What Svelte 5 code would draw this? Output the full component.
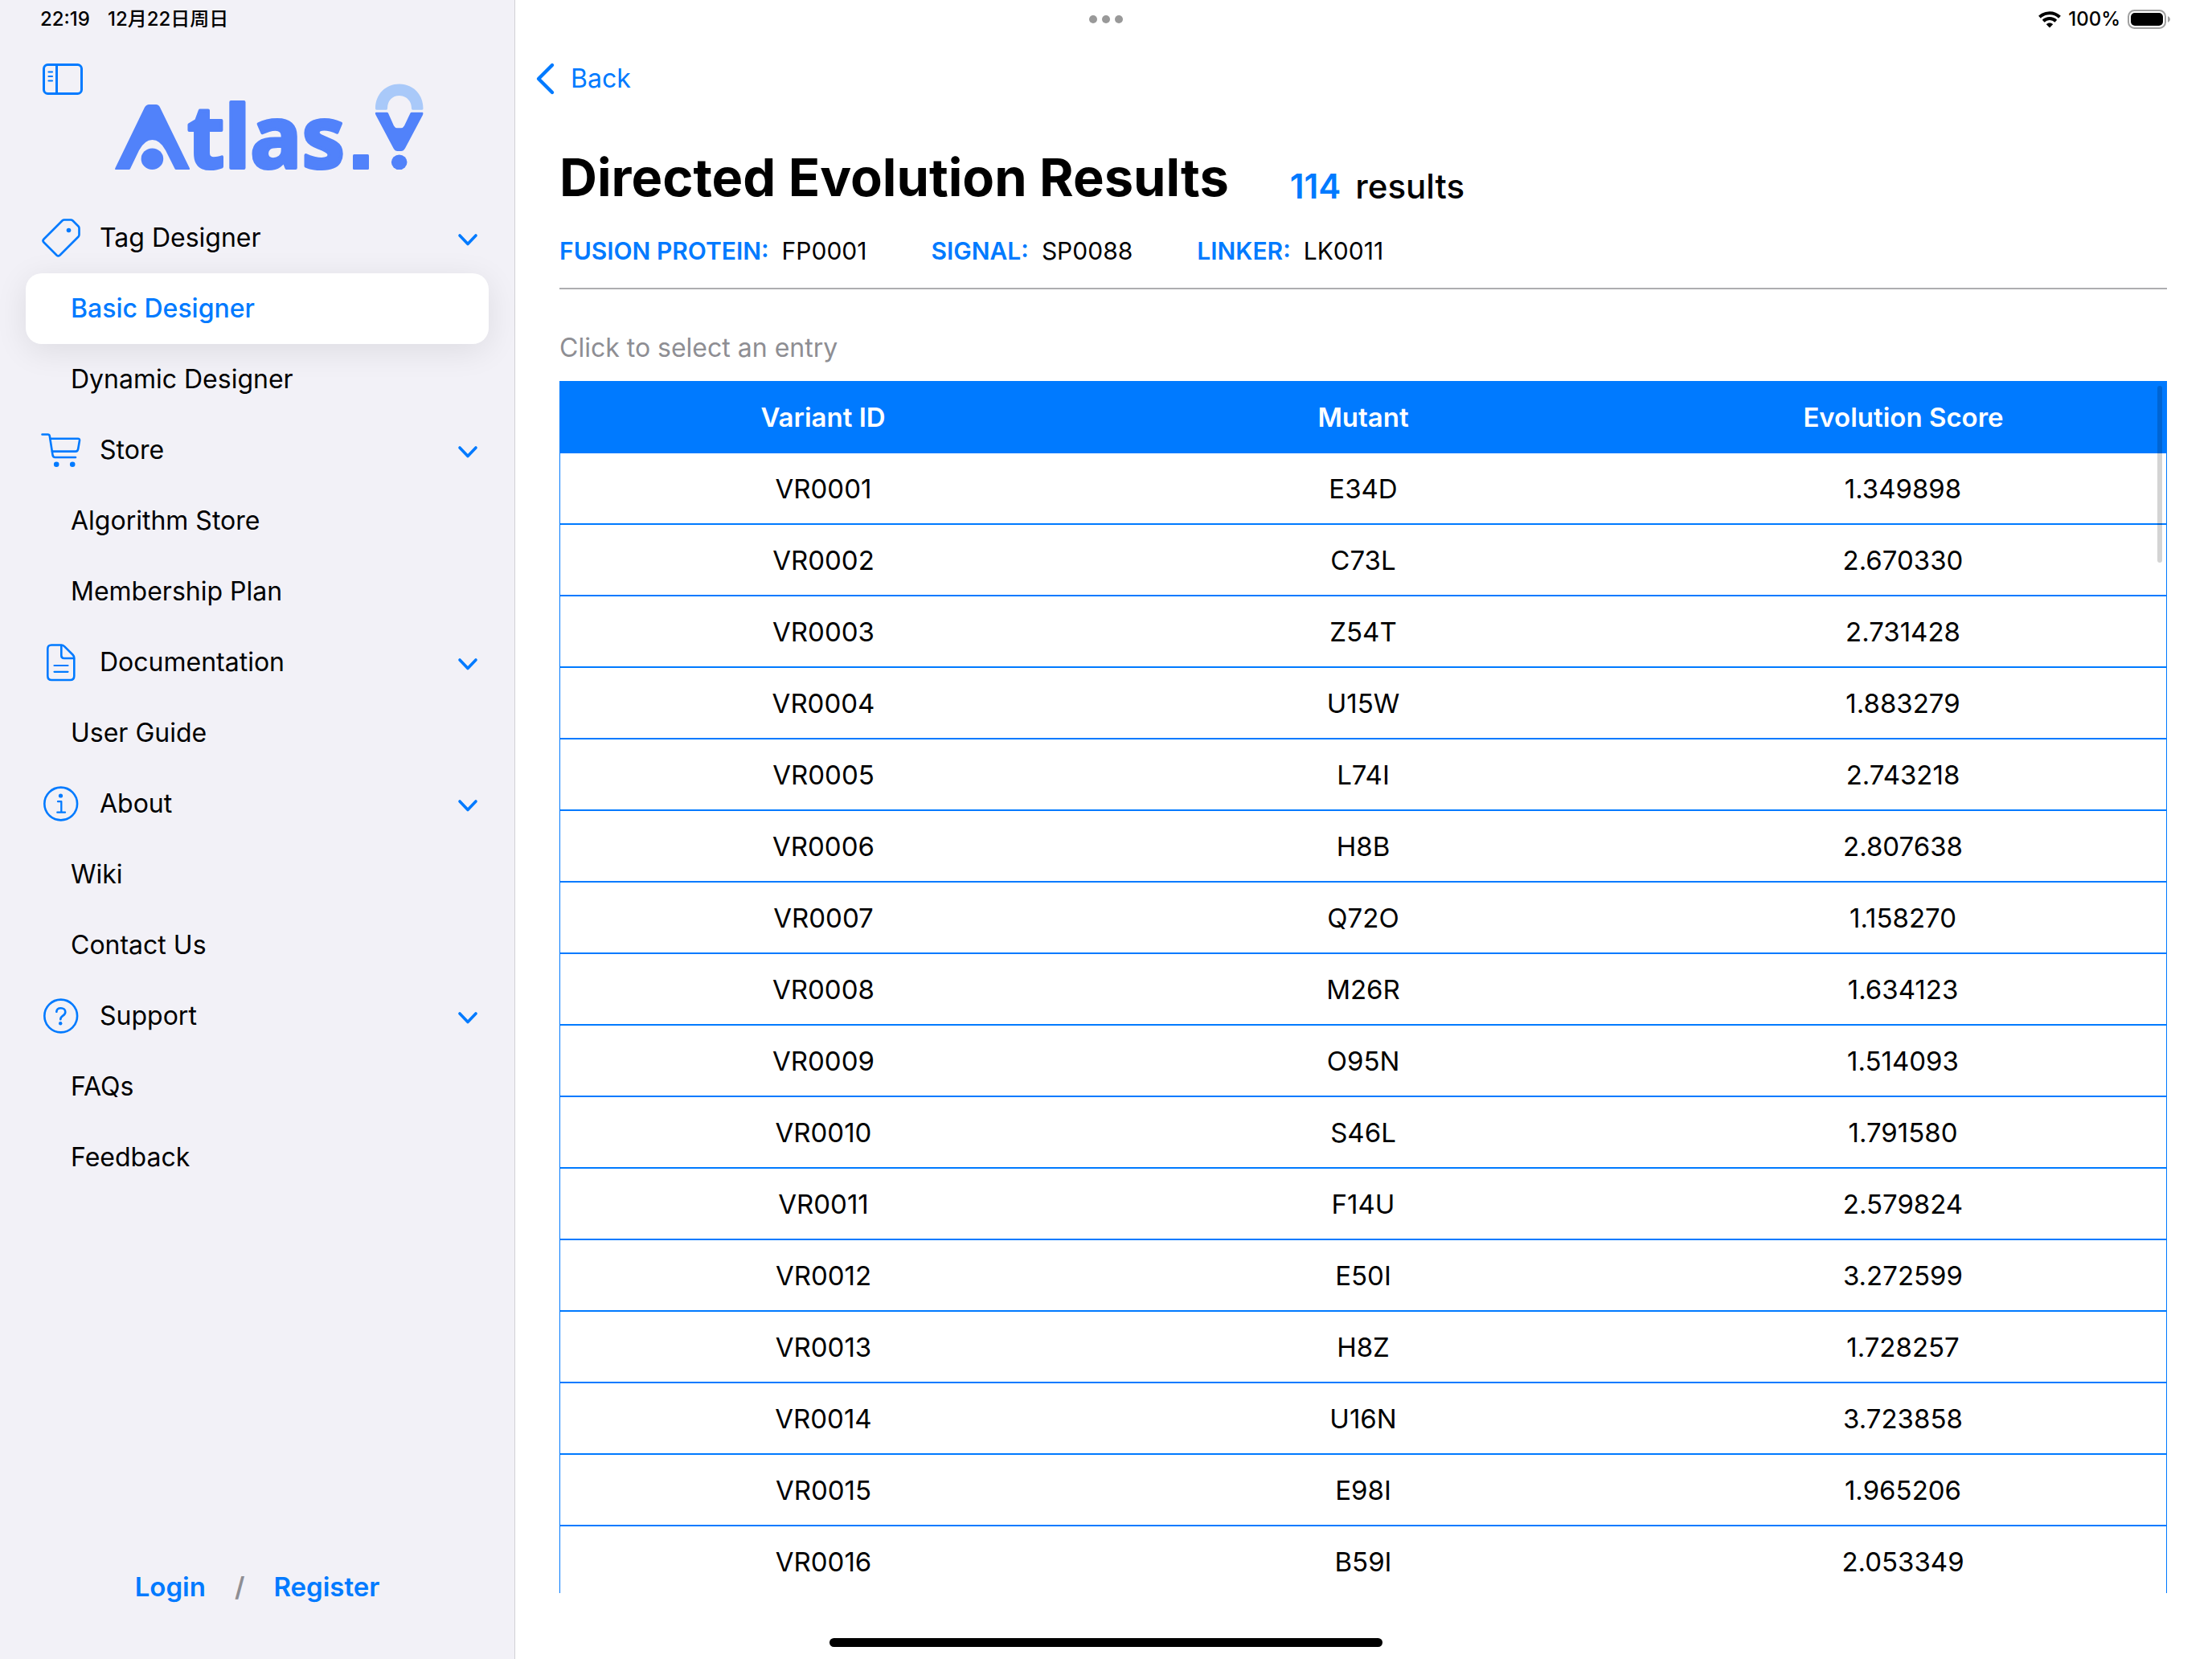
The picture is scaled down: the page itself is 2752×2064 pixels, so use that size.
<script>
  const sections = [
    { title: 'Tag Designer', icon: 'tag', items: ['Basic Designer', 'Dynamic Designer'] },
    { title: 'Store', icon: 'cart', items: ['Algorithm Store', 'Membership Plan'] },
    { title: 'Documentation', icon: 'doc', items: ['User Guide'] },
    { title: 'About', icon: 'info', items: ['Wiki', 'Contact Us'] },
    { title: 'Support', icon: 'help', items: ['FAQs', 'Feedback'] }
  ];

  const details = [
    ['FUSION PROTEIN:', 'FP0001'],
    ['SIGNAL:', 'SP0088'],
    ['LINKER:', 'LK0011']
  ];

  const variants = [
    ['VR0001', 'E34D', '1.349898'],
    ['VR0002', 'C73L', '2.670330'],
    ['VR0003', 'Z54T', '2.731428'],
    ['VR0004', 'U15W', '1.883279'],
    ['VR0005', 'L74I', '2.743218'],
    ['VR0006', 'H8B', '2.807638'],
    ['VR0007', 'Q72O', '1.158270'],
    ['VR0008', 'M26R', '1.634123'],
    ['VR0009', 'O95N', '1.514093'],
    ['VR0010', 'S46L', '1.791580'],
    ['VR0011', 'F14U', '2.579824'],
    ['VR0012', 'E50I', '3.272599'],
    ['VR0013', 'H8Z', '1.728257'],
    ['VR0014', 'U16N', '3.723858'],
    ['VR0015', 'E98I', '1.965206'],
    ['VR0016', 'B59I', '2.053349']
  ];

  let selected = $state('Basic Designer');
  let closed = $state({});
</script>

<div class="app">
  <aside class="sidebar">
    <div class="status">
      <span>22:19</span>
      <span>12月22日周日</span>
    </div>

    <div class="brand">
      <button class="toggle" aria-label="Toggle sidebar">
        <svg width="52" height="42" viewBox="0 0 52 42" fill="none" stroke="currentColor" stroke-width="3" stroke-linecap="round">
          <rect x="2.5" y="2.5" width="47" height="36" rx="5" />
          <path d="M18.5 2.5V38.5" stroke-linecap="butt" />
          <path d="M8.5 11.5H13M8.5 17H13M8.5 22.5H13" stroke-width="2.2" />
        </svg>
      </button>
      <svg class="logo" width="390" height="144" viewBox="140 102 390 144" role="img" aria-label="Atlas.Y">
        <g fill="#5182fa">
          <path d="M180 133.500Q182 130 185.500 130H194Q197.500 130 199 133.500L236 209.500Q236.500 211 235 211H219Q218 211 217.500 210L206 187Q199 174 189.500 174Q180 174 173 187L162 210Q161.500 211 160.500 211H144Q142.500 211 143.200 209.500Z" />
          <ellipse cx="189.400" cy="197.700" rx="13.800" ry="13.300" />
          <text class="word" x="233" y="209">tlas</text>
          <rect x="439" y="192" width="20" height="19" rx="1.500" />
          <path d="M468 139.700H481.500Q482.500 139.700 483 140.700L490 156.500Q491.500 159.200 494 159.200H499Q501.500 159.200 503 156.500L510.500 140.700Q511 139.700 512 139.700H525.500Q527 139.700 526 143L504 184.500Q502 188 499 188H494.500Q491.500 188 489.500 184.500L467.500 143Q466 139.700 468 139.700Z" />
          <ellipse cx="496.700" cy="201.800" rx="9.800" ry="9.300" />
        </g>
        <path fill="#a9c9f9" d="M467 135C467 117 480 104.500 496.700 104.500S526.500 117 526.500 135Q526.500 136.700 525 136.700H513.500Q512 136.700 512 135C512 125 505 119 496.700 119S482 125 482 135Q482 136.700 480.500 136.700H468.500Q467 136.700 467 135Z" />
      </svg>
    </div>

    <nav>
      {#each sections as section}
        <button
          class="row heading"
          aria-expanded={!closed[section.title]}
          onclick={() => (closed[section.title] = !closed[section.title])}
        >
          <svg class="icon" viewBox="0 0 48 48" fill="none" stroke="currentColor" stroke-width="2.600" stroke-linecap="round" stroke-linejoin="round">
            {#if section.icon === 'tag'}
              <path d="M28 1.500H36Q37.500 1.500 38.500 2.500L45.500 9.500Q46.500 10.500 46.500 12V20Q46.500 21.500 45.500 22.500L22.500 45.500Q20.500 47.300 18.500 45.500L2.500 29.500Q.500 27.500 2.500 25.500L25.500 2.500Q26.500 1.500 28 1.500Z" />
              <circle cx="33.500" cy="14.500" r="2.800" fill="currentColor" stroke="none" />
            {:else if section.icon === 'cart'}
              <path d="M.500 4.500H7.500Q9.500 4.500 9.800 6.500L13.500 30Q14 33 16.500 33H42" />
              <path d="M10.500 9.800H45Q47.300 9.800 47 12L45.200 22.500Q44.700 25.600 42 25.600H13" />
              <circle cx="18.200" cy="41.700" r="3.300" fill="currentColor" stroke="none" />
              <circle cx="38.200" cy="41.700" r="3.300" fill="currentColor" stroke="none" />
            {:else if section.icon === 'doc'}
              <path d="M12 2.500H24Q26.500 2.500 28.300 4.300L38.500 14.500Q40.300 16.300 40.300 18.800V41Q40.300 46 35.300 46H12.300Q7.300 46 7.300 41V7.300Q7.300 2.500 12 2.500Z" />
              <path d="M24.300 3V15.500Q24.300 19 27.800 19H40" />
              <path d="M15.500 28H32.500M15.500 35.800H32.500" stroke-width="2.200" />
            {:else if section.icon === 'info'}
              <circle cx="23.700" cy="24" r="20.400" />
              <circle cx="23.500" cy="14" r="2.600" fill="currentColor" stroke="none" />
              <path d="M20 21.200H24.300V34.700M19.300 34.700H29" stroke-width="2.300" />
            {:else}
              <circle cx="23.700" cy="24" r="20.400" />
              <path d="M18.300 18.800C18.500 15.800 20.700 14.300 23.700 14.300C27 14.300 29.300 16.200 29.300 19C29.300 21.300 28.100 22.500 26 23.900C24.200 25.100 23.300 26 23.300 28.200" />
              <circle cx="23.200" cy="33.300" r="2.200" fill="currentColor" stroke="none" />
            {/if}
          </svg>
          <span>{section.title}</span>
          <svg class="chevron" viewBox="0 0 24 24" fill="none" stroke="currentColor" stroke-width="3.600" stroke-linecap="round" stroke-linejoin="round">
            <path d="M2 9L12 19.500L22 9" />
          </svg>
        </button>
        {#if !closed[section.title]}
          {#each section.items as item}
            <button class="row item" class:active={item === selected} onclick={() => (selected = item)}>{item}</button>
          {/each}
        {/if}
      {/each}
    </nav>

    <footer class="account">
      <a href="#login">Login</a>
      <span>/</span>
      <a href="#register">Register</a>
    </footer>
  </aside>

  <main>
    <div class="status device">
      <svg width="28" height="21" viewBox="0 0 28 21" fill="none" stroke="#000" stroke-width="4">
        <path d="M1.500 7.200C8.500 .500 19.500 .500 26.500 7.200" />
        <path d="M6.200 12.200C10.500 8 17.500 8 21.800 12.200" />
        <path d="M14 20.500L9.800 16.200C12 13.900 16 13.900 18.200 16.200Z" fill="#000" stroke="none" />
      </svg>
      <span>100%</span>
      <svg width="54" height="24" viewBox="0 0 54 24">
        <rect x="1" y="1" width="46" height="22" rx="7.500" fill="none" stroke="#a0a0a0" stroke-width="2" />
        <rect x="4" y="4" width="40" height="16" rx="5" />
        <path d="M50 8Q53 9.500 53 12T50 16Z" fill="#a0a0a0" />
      </svg>
    </div>

    <button class="back">
      <svg width="24" height="40" viewBox="0 0 24 40" fill="none" stroke="currentColor" stroke-width="4.400" stroke-linecap="round" stroke-linejoin="round">
        <path d="M21 3L4 20L21 37" />
      </svg>
      Back
    </button>

    <div class="content">
      <header>
        <h1>Directed Evolution Results</h1>
        <p class="count"><b>114</b><span>results</span></p>
      </header>

      <dl>
        {#each details as [label, value]}
          <div>
            <dt>{label}</dt>
            <dd>{value}</dd>
          </div>
        {/each}
      </dl>

      <p class="hint">Click to select an entry</p>

      <div class="viewport">
        <table>
          <thead>
            <tr>
              <th scope="col">Variant ID</th>
              <th scope="col">Mutant</th>
              <th scope="col">Evolution Score</th>
            </tr>
          </thead>
          <tbody>
            {#each variants as variant}
              <tr>
                {#each variant as cell}
                  <td>{cell}</td>
                {/each}
              </tr>
            {/each}
          </tbody>
        </table>
        <div class="scrollbar"></div>
      </div>
    </div>
  </main>

  <div class="dots"><i></i><i></i><i></i></div>
  <div class="home"></div>
</div>

<style>
  :global(body) {
    background: #fff;
  }

  .app {
    position: relative;
    display: grid;
    grid-template-columns: 641px minmax(0, 1fr);
    height: 100vh;
    overflow: hidden;
    color: #000;
    font-family: Inter, 'Noto Sans CJK SC', sans-serif;
    font-size: 32px;
    line-height: 40px;
  }

  .app *,
  .app {
    box-sizing: border-box;
  }

  button {
    display: flex;
    align-items: center;
    margin: 0;
    padding: 0;
    border: 0;
    background: none;
    color: inherit;
    font: inherit;
    text-align: left;
    cursor: pointer;
  }

  svg {
    display: block;
    flex: none;
    overflow: visible;
  }

  .sidebar {
    display: flex;
    flex-direction: column;
    border-right: 1px solid #d1d1d5;
    background: #f2f1f7;
  }

  .status {
    display: flex;
    align-items: center;
    gap: 22px;
    height: 48px;
    padding: 0 50px;
    font-size: 24px;
    font-weight: 500;
    line-height: 28px;
  }

  .device {
    justify-content: flex-end;
    gap: 9px;
    padding-right: 51px;
  }

  .brand {
    display: flex;
    align-items: flex-start;
    gap: 36px;
    height: 204px;
    padding: 30px 52px 0;
  }

  .toggle {
    color: #007aff;
  }

  .logo {
    margin-top: 24px;
  }

  .word {
    font-family: 'Noto Sans', sans-serif;
    font-size: 107px;
    font-weight: 700;
    stroke: #5182fa;
    stroke-width: 4px;
    stroke-linejoin: round;
  }

  nav {
    flex: 1;
    padding: 0 32px;
  }

  .row {
    width: 100%;
    height: 88px;
    border-radius: 20px;
  }

  .heading {
    gap: 24px;
    padding: 0 14px 0 20px;
  }

  .item {
    padding: 0 56px;
  }

  .active {
    background: #fff;
    box-shadow: 0 8px 40px rgba(0, 0, 0, 0.09);
    color: #007aff;
    font-weight: 500;
  }

  .icon {
    width: 48px;
    height: 48px;
    color: #007aff;
  }

  .chevron {
    width: 24px;
    height: 24px;
    margin-left: auto;
    color: #007aff;
  }

  .account {
    display: flex;
    justify-content: center;
    gap: 36px;
    padding-bottom: 70px;
    color: #8e8e93;
    font-size: 33px;
    font-weight: 600;
  }

  a {
    color: #007aff;
    text-decoration: none;
  }

  main {
    display: flex;
    flex-direction: column;
    min-width: 0;
    height: 100vh;
  }

  .back {
    gap: 20px;
    height: 100px;
    padding-left: 25px;
    color: #007aff;
  }

  .content {
    display: flex;
    flex: 1;
    flex-direction: column;
    min-height: 0;
    padding: 33px 56px 82px 55px;
  }

  header {
    display: flex;
    align-items: flex-end;
    gap: 76px;
  }

  h1,
  p,
  dl,
  dd {
    margin: 0;
  }

  h1 {
    font-size: 65px;
    font-weight: 700;
    line-height: 80px;
  }

  .count {
    display: flex;
    gap: 18px;
    font-size: 42px;
    font-weight: 500;
    line-height: 58px;
  }

  .count b {
    color: #007aff;
    font-weight: 600;
  }

  dl {
    display: flex;
    gap: 80px;
    padding: 31px 0 26px;
    border-bottom: 2px solid #adadb0;
    font-size: 30px;
  }

  dl div {
    display: flex;
    gap: 16px;
  }

  dt {
    color: #007aff;
    font-weight: 600;
  }

  .hint {
    padding: 53px 0 21px;
    color: #8e8e93;
  }

  .viewport {
    position: relative;
    flex: 1;
    min-height: 0;
    overflow: hidden;
  }

  table {
    width: 100%;
    border-collapse: separate;
    border-spacing: 0;
    table-layout: fixed;
    font-size: 33px;
    text-align: center;
  }

  th,
  td {
    padding: 0;
  }

  th {
    height: 90px;
    background: #007aff;
    color: #fff;
    font-weight: 600;
  }

  th:nth-child(2) {
    width: 33.6%;
  }

  td {
    height: 89px;
    border-bottom: 2px solid #007aff;
  }

  td:first-child {
    border-left: 1px solid #007aff;
  }

  td:last-child {
    border-right: 1px solid #007aff;
  }

  th:first-child,
  td:first-child {
    padding-right: 8px;
  }

  th:last-child,
  td:last-child {
    padding-left: 8px;
  }

  .scrollbar {
    position: absolute;
    top: 6px;
    right: 6px;
    width: 6px;
    height: 220px;
    border-radius: 3px;
    background: rgba(0, 0, 0, 0.17);
  }

  .dots {
    position: absolute;
    top: 19px;
    left: 50%;
    display: flex;
    gap: 6px;
    transform: translateX(-50%);
  }

  .dots i {
    width: 10px;
    height: 10px;
    border-radius: 50%;
    background: #999;
  }

  .home {
    position: absolute;
    bottom: 15px;
    left: 50%;
    width: 25%;
    height: 11px;
    border-radius: 6px;
    background: #000;
    transform: translateX(-50%);
  }
</style>
